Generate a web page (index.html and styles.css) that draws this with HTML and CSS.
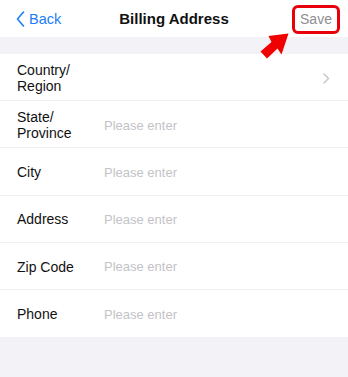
FILE: index.html
```html
<!DOCTYPE html>
<html>
<head>
<meta charset="utf-8">
<link rel="stylesheet" href="styles.css">
</head>
<body>
<div class="page">
  <header class="navbar">
    <div class="nav-left">
      <svg class="back-icon" width="9" height="16" viewBox="0 0 9 16"><path d="M7.5 1 L1.5 8 L7.5 15" fill="none" stroke="#1b7ef2" stroke-width="1.6" stroke-linecap="round" stroke-linejoin="round"/></svg>
      <span class="back-text">Back</span>
    </div>
    <div class="nav-title">Billing Address</div>
    <div class="nav-right">
      <span class="save">Save</span>
    </div>
    <svg class="pointer" width="35" height="30" viewBox="255 30 35 30"><path d="M288.5 33.5 L281.5 54.5 L277.5 48.5 L267 58.5 L260.5 51.5 L271.5 42 L268.5 36 Z" fill="#f00000"/></svg>
  </header>
  <div class="spacer"></div>
  <section class="form">
    <div class="row">
      <div class="label">Country/<br>Region</div>
      <div class="value"></div>
      <svg class="chev" width="7" height="11" viewBox="0 0 7 11"><path d="M1 1 L5.5 5.5 L1 10" fill="none" stroke="#c4c4c8" stroke-width="1.4" stroke-linecap="round" stroke-linejoin="round"/></svg>
    </div>
    <div class="row">
      <div class="label">State/<br>Province</div>
      <div class="value">Please enter</div>
    </div>
    <div class="row">
      <div class="label">City</div>
      <div class="value">Please enter</div>
    </div>
    <div class="row">
      <div class="label">Address</div>
      <div class="value">Please enter</div>
    </div>
    <div class="row">
      <div class="label">Zip Code</div>
      <div class="value">Please enter</div>
    </div>
    <div class="row last">
      <div class="label">Phone</div>
      <div class="value">Please enter</div>
    </div>
  </section>
  <div class="footer-fill"></div>
</div>
</body>
</html>
```
FILE: styles.css
```css
* { box-sizing: border-box; }
html, body { margin: 0; padding: 0; }
body {
  font-family: "Liberation Sans", Arial, sans-serif;
  background: #f3f3f7;
  width: 348px;
  height: 377px;
  overflow: hidden;
}
.page { display: flex; flex-direction: column; height: 377px; }
.navbar {
  position: relative;
  height: 37px;
  background: #ffffff;
  display: flex;
  align-items: center;
  justify-content: space-between;
  padding: 0 8px 0 16px;
}
.nav-left { display: flex; align-items: center; gap: 4px; width: 72px; }
.back-icon { display: block; }
.back-text { color: #1b7ef2; font-size: 14.5px; }
.nav-title {
  font-size: 15px;
  font-weight: bold;
  color: #111111;
}
.nav-right { width: 80px; display: flex; justify-content: flex-end; }
.save {
  display: block;
  width: 48px;
  height: 29px;
  border: 3px solid #e8000b;
  border-radius: 6px;
  color: #8e8e93;
  font-size: 14px;
  line-height: 23px;
  text-align: center;
  margin-top: 1px;
}
.pointer { position: absolute; left: 255px; top: 30px; }
.spacer { height: 17px; background: #f3f3f7; }
.form { background: #ffffff; }
.row {
  height: 47.2px;
  display: flex;
  align-items: center;
  padding: 2px 18px 0 17px;
  border-bottom: 1px solid #f0f0f4;
}
.row.last { border-bottom: none; }
.label {
  width: 87px;
  font-size: 14px;
  line-height: 16.5px;
  color: #111111;
}
.value {
  flex: 1;
  font-size: 13px;
  color: #c3c3c7;
}
.chev { display: block; }
.footer-fill { flex: 1; background: #f3f3f7; }
```
